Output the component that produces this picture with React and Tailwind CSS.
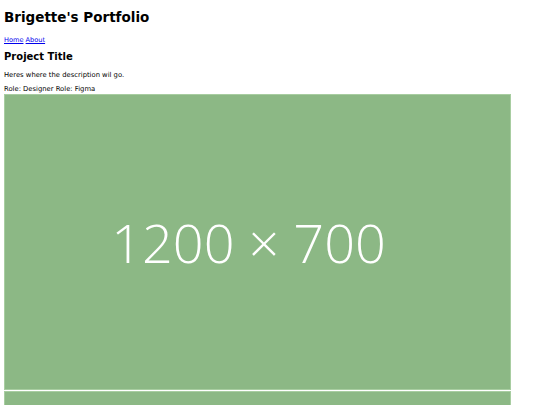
export default function App() {
  return (
    <div className="min-h-screen bg-white px-[4px] font-['DejaVu_Sans',sans-serif] text-black">
      <h1 className="pt-[9px] text-[13.5px] font-bold leading-[16px]">Brigette's Portfolio</h1>
      <nav className="mt-[11px] text-[6.6px] leading-[8px]">
        <a href="#" className="text-[#0000ee] underline">Home</a>{' '}
        <a href="#" className="text-[#0000ee] underline">About</a>
      </nav>
      <h2 className="mt-[7px] text-[10px] font-bold leading-[12px]">Project Title</h2>
      <p className="mt-[8px] text-[6.8px] leading-[9px]">Heres where the description wil go.</p>
      <p className="mt-[5px] text-[6.8px] leading-[9px]">Role: Designer Role: Figma</p>
      <div className="flex w-[507px] flex-col gap-[1px]">
        <Placeholder />
        <Placeholder />
      </div>
    </div>
  );
}

function Placeholder() {
  return (
    <div className="flex h-[296px] w-[507px] items-center justify-center border border-[#a8cda1] bg-[#8cb885]">
      <span className="pr-[18px] font-['Open_Sans',sans-serif] text-[54px] font-light leading-none text-white">
        1200 × 700
      </span>
    </div>
  );
}
